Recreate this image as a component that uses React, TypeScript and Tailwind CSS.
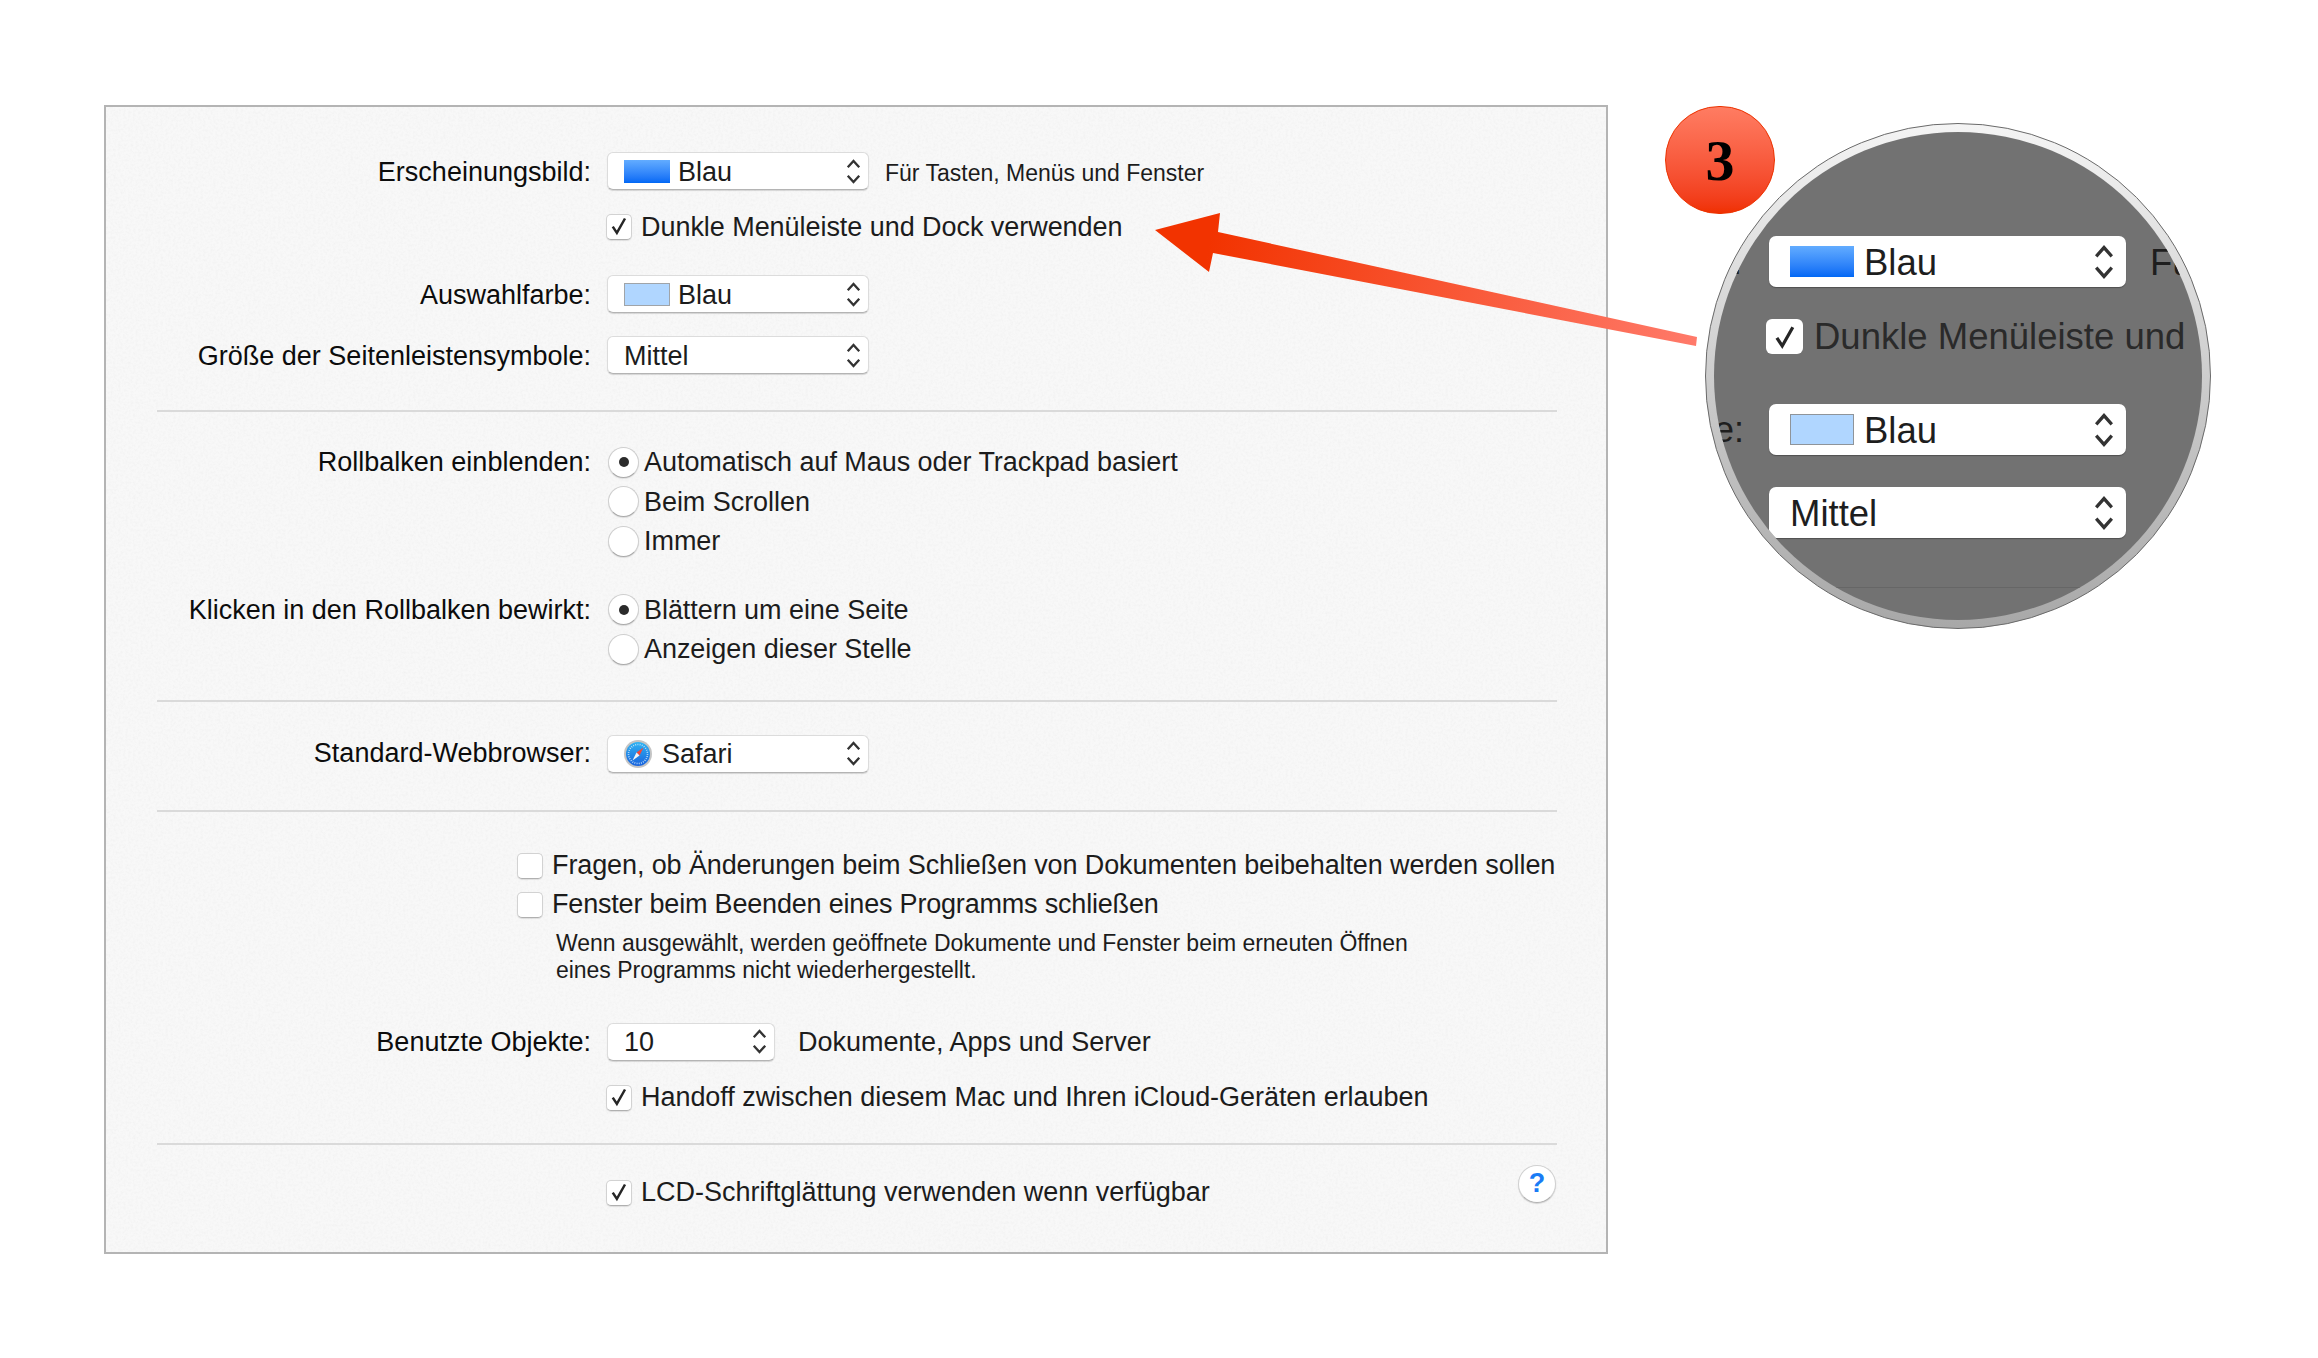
import { ReactNode } from 'react';

const font = "font-['Liberation_Sans',Arial,sans-serif]";

function Chevrons({ big }: { big?: boolean }) {
  return (
    <svg
      viewBox="0 0 14 24"
      fill="none"
      stroke="#333333"
      strokeWidth={big ? 2.3 : 2.2}
      className={big ? 'w-[22px] h-[34px] shrink-0' : 'w-[15px] h-[25px] shrink-0'}
    >
      <path d="M1.5 8 7 1.8 12.5 8" />
      <path d="M1.5 16 7 22.2 12.5 16" />
    </svg>
  );
}

function SafariIcon() {
  return (
    <svg viewBox="0 0 28 28" className="w-[28px] h-[28px] shrink-0 mr-[10px]">
      <defs>
        <linearGradient id="safari" x1="0" y1="0" x2="0" y2="1">
          <stop offset="0" stopColor="#2fb4f3" />
          <stop offset="1" stopColor="#1a62dc" />
        </linearGradient>
      </defs>
      <circle cx="14" cy="14" r="14" fill="#c4c4c4" />
      <circle cx="14" cy="14" r="12" fill="url(#safari)" />
      <circle cx="14" cy="14" r="9.5" fill="none" stroke="#cfe8fb" strokeWidth="1.6" strokeDasharray="0.8 1.4" />
      <polygon points="19.5,7.5 15.5,15.5 12.5,12.5" fill="#f2483a" />
      <polygon points="8.5,20.5 12.5,12.5 15.5,15.5" fill="#f4f4f4" />
    </svg>
  );
}

function Select({ label, swatch, safari, lift, width = 'w-[262px]' }: { label: string; swatch?: string; safari?: boolean; lift?: boolean; width?: string }) {
  return (
    <div className={`${width} ${lift ? '-translate-y-[1px]' : ''} h-[38px] shrink-0 flex items-center pl-[16px] pr-[7px] bg-white rounded-[6px] border border-[#dcdcdc] border-b-[#b4b4b4] shadow-[0_1px_1px_rgba(0,0,0,0.14)]`}>
      {swatch === 'dark' && (
        <span className="w-[46px] h-[23px] mr-[8px] shrink-0 bg-gradient-to-b from-[#62acff] to-[#0068f5]" />
      )}
      {swatch === 'light' && (
        <span className="w-[46px] h-[23px] mr-[8px] shrink-0 bg-[#b0d6ff] border border-[#a0a4a8]" />
      )}
      {safari && <SafariIcon />}
      <span className="flex-1 pt-[2px] text-[27px] leading-none text-[#1c1c1c]">{label}</span>
      <Chevrons />
    </div>
  );
}

function Check({ checked }: { checked?: boolean }) {
  return (
    <span className="w-[26px] h-[26px] shrink-0 flex items-center justify-center bg-white rounded-[5px] border border-[#d2d2d2] border-b-[#b0b0b0] shadow-[0_1px_1px_rgba(0,0,0,0.1)]">
      {checked && (
        <svg viewBox="0 0 16 16" fill="none" stroke="#262626" strokeWidth="2" className="w-[20px] h-[20px] -mt-[2px]">
          <path d="M3 8.5 6.3 13.5 12.8 2" />
        </svg>
      )}
    </span>
  );
}

function Radio({ on }: { on?: boolean }) {
  return (
    <span className="w-[31px] h-[31px] shrink-0 flex items-center justify-center bg-white rounded-full border border-[#cfcfcf] border-b-[#aaaaaa] shadow-[0_1px_1px_rgba(0,0,0,0.1)]">
      {on && <span className="w-[10px] h-[10px] rounded-full bg-[#2b2b2b]" />}
    </span>
  );
}

function Label({ children }: { children?: ReactNode }) {
  return <div className="w-[485px] mr-[16px] shrink-0 text-right text-[27px] leading-none text-[#0c0c0c]">{children}</div>;
}

function Row({ label, className = '', children }: { label?: string; className?: string; children: ReactNode }) {
  return (
    <div className={`flex items-center ${className}`}>
      <Label>{label}</Label>
      {children}
    </div>
  );
}

function RadioRow({ label, text, on }: { label?: string; text: string; on?: boolean }) {
  return (
    <Row label={label} className="h-[39.5px]">
      <span className="ml-[1px] -mt-[1px]"><Radio on={on} /></span>
      <span className="ml-[5px] tracking-[-0.05px] text-[27px] leading-none text-[#1c1c1c]">{text}</span>
    </Row>
  );
}

function CheckRow({ text, className = '' }: { text: string; className?: string }) {
  return (
    <Row className={`h-[26px] ${className}`}>
      <span className="-ml-[1px]"><Check checked /></span>
      <span className="ml-[9px] tracking-[-0.05px] text-[27px] leading-none text-[#1c1c1c]">{text}</span>
    </Row>
  );
}

function Separator({ className = '' }: { className?: string }) {
  return <div className={`h-[2px] ml-[51px] mr-[49px] bg-[#dadada] ${className}`} />;
}

function LensSelect({ label, swatch, className = '' }: { label: string; swatch?: string; className?: string }) {
  return (
    <div className={`w-[357px] h-[51px] shrink-0 flex items-center pl-[21px] pr-[11px] bg-white rounded-[7px] shadow-[0_1px_1px_rgba(0,0,0,0.3)] ${className}`}>
      {swatch === 'dark' && <span className="w-[64px] h-[31px] mr-[10px] shrink-0 bg-gradient-to-b from-[#62acff] to-[#0068f5]" />}
      {swatch === 'light' && <span className="w-[64px] h-[31px] mr-[10px] shrink-0 bg-[#b0d6ff] border border-[#8f9499]" />}
      <span className="flex-1 pt-[3px] text-[36.5px] leading-none text-[#1e1e1e]">{label}</span>
      <Chevrons big />
    </div>
  );
}

function Magnifier() {
  return (
    <div className="absolute left-[1705px] top-[123px] w-[506px] h-[506px] rounded-full p-[8px] bg-gradient-to-b from-[#f4f4f4] to-[#a8a8a8] border border-[#6a6a6a]">
      <div className={`w-full h-full rounded-full overflow-hidden bg-[#727272] pt-[104px] ${font}`}>
        <div className="flex items-center h-[51px]">
          <span className="w-[28px] shrink-0 text-right text-[36px] leading-none text-[#1e1e1e]">.</span>
          <LensSelect label="Blau" swatch="dark" className="ml-[27px]" />
          <span className="ml-[24px] pt-[3px] text-[36.5px] leading-none text-[#1e1e1e] whitespace-nowrap">Fü</span>
        </div>
        <div className="flex items-center h-[35px] mt-[32px] pl-[52px]">
          <span className="w-[37px] h-[35px] shrink-0 flex items-center justify-center bg-white rounded-[6px]">
            <svg viewBox="0 0 16 16" fill="none" stroke="#262626" strokeWidth="2" className="w-[26px] h-[26px]">
              <path d="M3 8.5 6.3 13.5 12.8 2" />
            </svg>
          </span>
          <span className="ml-[11px] pt-[2px] text-[36.5px] leading-none text-[#2a2a2a] whitespace-nowrap">Dunkle Menüleiste und</span>
        </div>
        <div className="flex items-center h-[51px] mt-[50px]">
          <span className="w-[28px] shrink-0 text-right text-[36px] leading-none text-[#1e1e1e]">e:</span>
          <LensSelect label="Blau" swatch="light" className="ml-[27px]" />
        </div>
        <div className="flex items-center h-[51px] mt-[32px] pl-[55px]">
          <LensSelect label="Mittel" />
        </div>
        <div className="h-[1px] mt-[49px] bg-[#666666]" />
      </div>
    </div>
  );
}

function Arrow() {
  return (
    <svg viewBox="0 0 2318 1358" className="absolute inset-0 w-[2318px] h-[1358px] pointer-events-none">
      <defs>
        <linearGradient id="arrow" gradientUnits="userSpaceOnUse" x1="1155" y1="230" x2="1697" y2="340">
          <stop offset="0.1" stopColor="#f23300" />
          <stop offset="1" stopColor="#ff7a6a" />
        </linearGradient>
      </defs>
      <polygon
        points="1155,230 1220,213 1218,232 1697,337 1696,346 1213,253 1209,272"
        fill="url(#arrow)"
      />
    </svg>
  );
}

export default function App() {
  return (
    <div className={`relative w-[2318px] h-[1358px] bg-white overflow-hidden pt-[105px] pl-[104px] ${font}`}>
      {/* Panel */}
      <div className="relative w-[1504px] h-[1149px] border-2 border-[#b4b4b4] bg-[#f8f8f8] pt-[46px]">
        <svg className="absolute inset-0 w-full h-full pointer-events-none opacity-[0.1]">
          <filter id="paper">
            <feTurbulence type="fractalNoise" baseFrequency="0.4" numOctaves="4" seed="4" />
            <feColorMatrix values="0 0 0 0 0.4  0 0 0 0 0.4  0 0 0 0 0.4  0 0 0 1.4 -0.55" />
          </filter>
          <rect width="100%" height="100%" filter="url(#paper)" />
        </svg>

        <div className="relative">
          <Row label="Erscheinungsbild:">
            <Select label="Blau" swatch="dark" lift />
            <span className="ml-[16px] pt-[2px] text-[23px] leading-none text-[#1c1c1c]">Für Tasten, Menüs und Fenster</span>
          </Row>
          <CheckRow text="Dunkle Menüleiste und Dock verwenden" className="mt-[23px]" />
          <Row label="Auswahlfarbe:" className="mt-[36px]">
            <Select label="Blau" swatch="light" lift />
          </Row>
          <Row label="Größe der Seitenleistensymbole:" className="mt-[23px]">
            <Select label="Mittel" lift />
          </Row>
          <Separator className="mt-[35px]" />

          <div className="mt-[31px]">
            <RadioRow label="Rollbalken einblenden:" text="Automatisch auf Maus oder Trackpad basiert" on />
            <RadioRow text="Beim Scrollen" />
            <RadioRow text="Immer" />
          </div>
          <div className="mt-[29px]">
            <RadioRow label="Klicken in den Rollbalken bewirkt:" text="Blättern um eine Seite" on />
            <RadioRow text="Anzeigen dieser Stelle" />
          </div>
          <Separator className="mt-[30px]" />

          <Row label="Standard-Webbrowser:" className="mt-[33px]">
            <Select label="Safari" safari />
          </Row>
          <Separator className="mt-[37px]" />

          <div className="mt-[35px] pl-[411px]">
            <div className="flex items-center h-[38px]">
              <Check />
              <span className="ml-[9px] tracking-[-0.11px] text-[27px] leading-none text-[#1c1c1c]">Fragen, ob Änderungen beim Schließen von Dokumenten beibehalten werden sollen</span>
            </div>
            <div className="flex items-center h-[38px] mt-[1px]">
              <Check />
              <span className="ml-[9px] tracking-[-0.19px] text-[27px] leading-none text-[#1c1c1c]">Fenster beim Beenden eines Programms schließen</span>
            </div>
            <p className="mt-[6px] ml-[39px] tracking-[-0.03px] text-[23px] leading-[27px] text-[#1c1c1c]">
              Wenn ausgewählt, werden geöffnete Dokumente und Fenster beim erneuten Öffnen
              <br />
              eines Programms nicht wiederhergestellt.
            </p>
          </div>

          <Row label="Benutzte Objekte:" className="mt-[40px]">
            <Select label="10" width="w-[168px]" lift />
            <span className="ml-[23px] text-[27px] leading-none text-[#1c1c1c]">Dokumente, Apps und Server</span>
          </Row>
          <CheckRow text="Handoff zwischen diesem Mac und Ihren iCloud-Geräten erlauben" className="mt-[23px]" />
          <Separator className="mt-[32px]" />

          <div className="flex items-start mt-[20px] mr-[50px]">
            <div className="w-[501px] shrink-0" />
            <span className="-ml-[1px] mt-[15px]"><Check checked /></span>
            <span className="ml-[9px] mt-[15px] h-[26px] flex items-center text-[27px] leading-none text-[#1c1c1c]">LCD-Schriftglättung verwenden wenn verfügbar</span>
            <div className="ml-auto w-[38px] h-[38px] flex items-center justify-center rounded-full bg-white border border-[#d0d0d0] border-b-[#b0b0b0] shadow-[0_1px_1px_rgba(0,0,0,0.15)] text-[27px] font-bold leading-none text-[#1a7cf5]">?</div>
          </div>
        </div>
      </div>

      <Arrow />

      {/* Badge */}
      <div className="absolute left-[1665px] top-[106px] w-[110px] h-[108px] rounded-full flex items-center justify-center pt-[2px] border border-[#ec3200] bg-gradient-to-b from-[#ff7c62] to-[#f03000]">
        <span className="font-['Liberation_Serif',serif] font-bold text-[58px] leading-none text-black">3</span>
      </div>

      <Magnifier />
    </div>
  );
}
